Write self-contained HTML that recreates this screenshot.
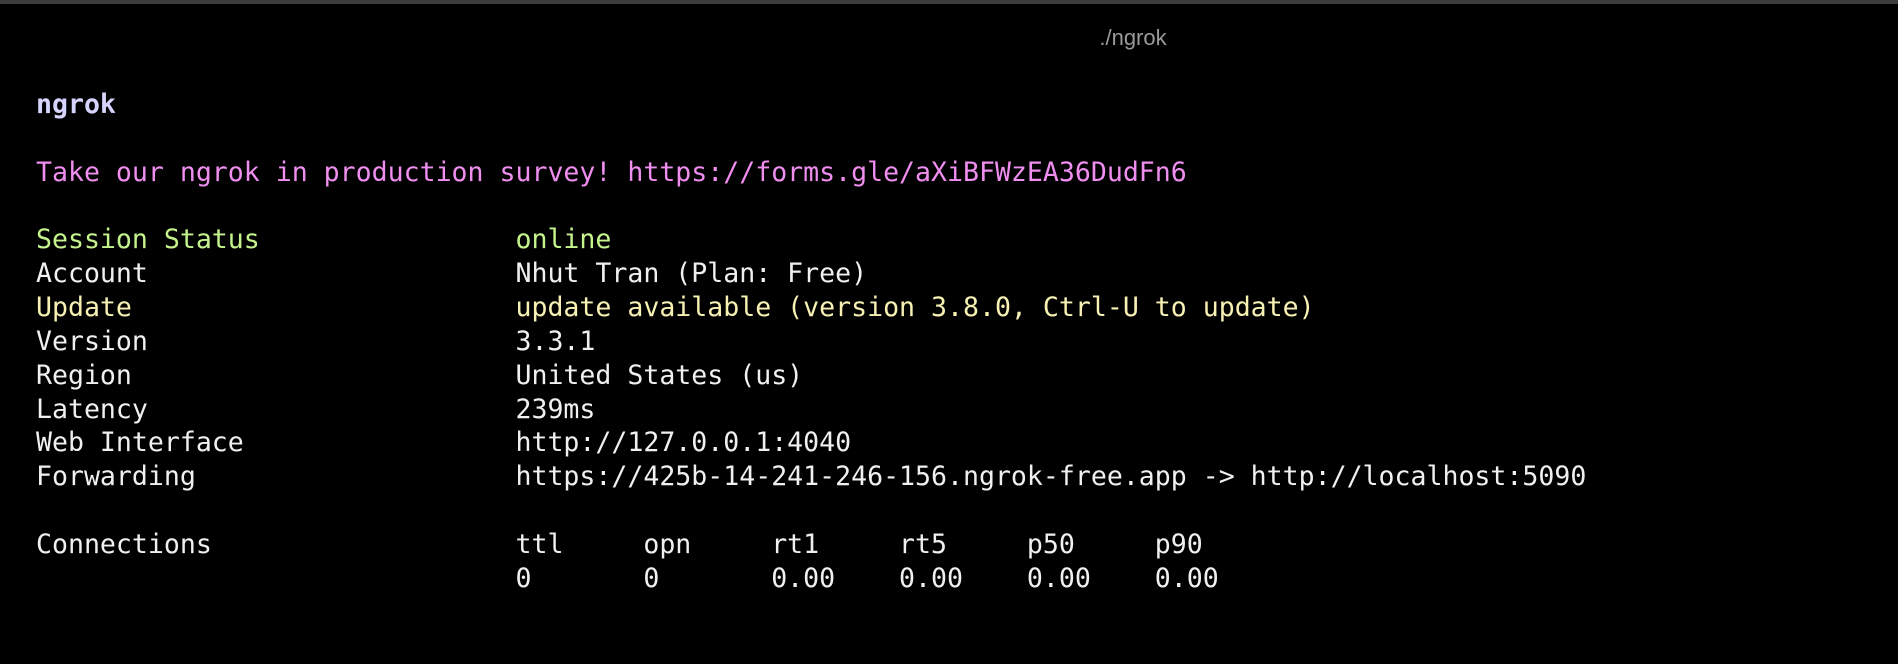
<!DOCTYPE html>
<html><head><meta charset="utf-8"><style>
html,body{margin:0;padding:0;background:#000;width:1898px;height:664px;overflow:hidden}
.bar{position:absolute;left:0;top:0;width:1898px;height:4px;background:#3c3c3c}
.title{position:absolute;left:0;width:1898px;top:25px;text-align:center;font-family:"Liberation Sans",sans-serif;font-size:22px;color:#9a9a9a;padding-left:368px;box-sizing:border-box}
pre{position:absolute;left:36px;top:88px;margin:0;font-family:"DejaVu Sans Mono","Liberation Mono",monospace;font-size:26.55px;line-height:33.85px;color:#f0f0f0}
.b{color:#d4d4fc;font-weight:bold}
.p{color:#f08ef0}
.g{color:#c6f48c}
.y{color:#f7f2b4}
</style></head><body>
<div class="bar"></div>
<div class="title">./ngrok</div>
<pre><span class="b">ngrok</span>

<span class="p">Take our ngrok in production survey! https://forms.gle/aXiBFWzEA36DudFn6</span>

<span class="g">Session Status                online</span>
Account                       Nhut Tran (Plan: Free)
<span class="y">Update                        update available (version 3.8.0, Ctrl-U to update)</span>
Version                       3.3.1
Region                        United States (us)
Latency                       239ms
Web Interface                 http://127.0.0.1:4040
Forwarding                    https://425b-14-241-246-156.ngrok-free.app -&gt; http://localhost:5090

Connections                   ttl     opn     rt1     rt5     p50     p90
                              0       0       0.00    0.00    0.00    0.00
</pre>
</body></html>
